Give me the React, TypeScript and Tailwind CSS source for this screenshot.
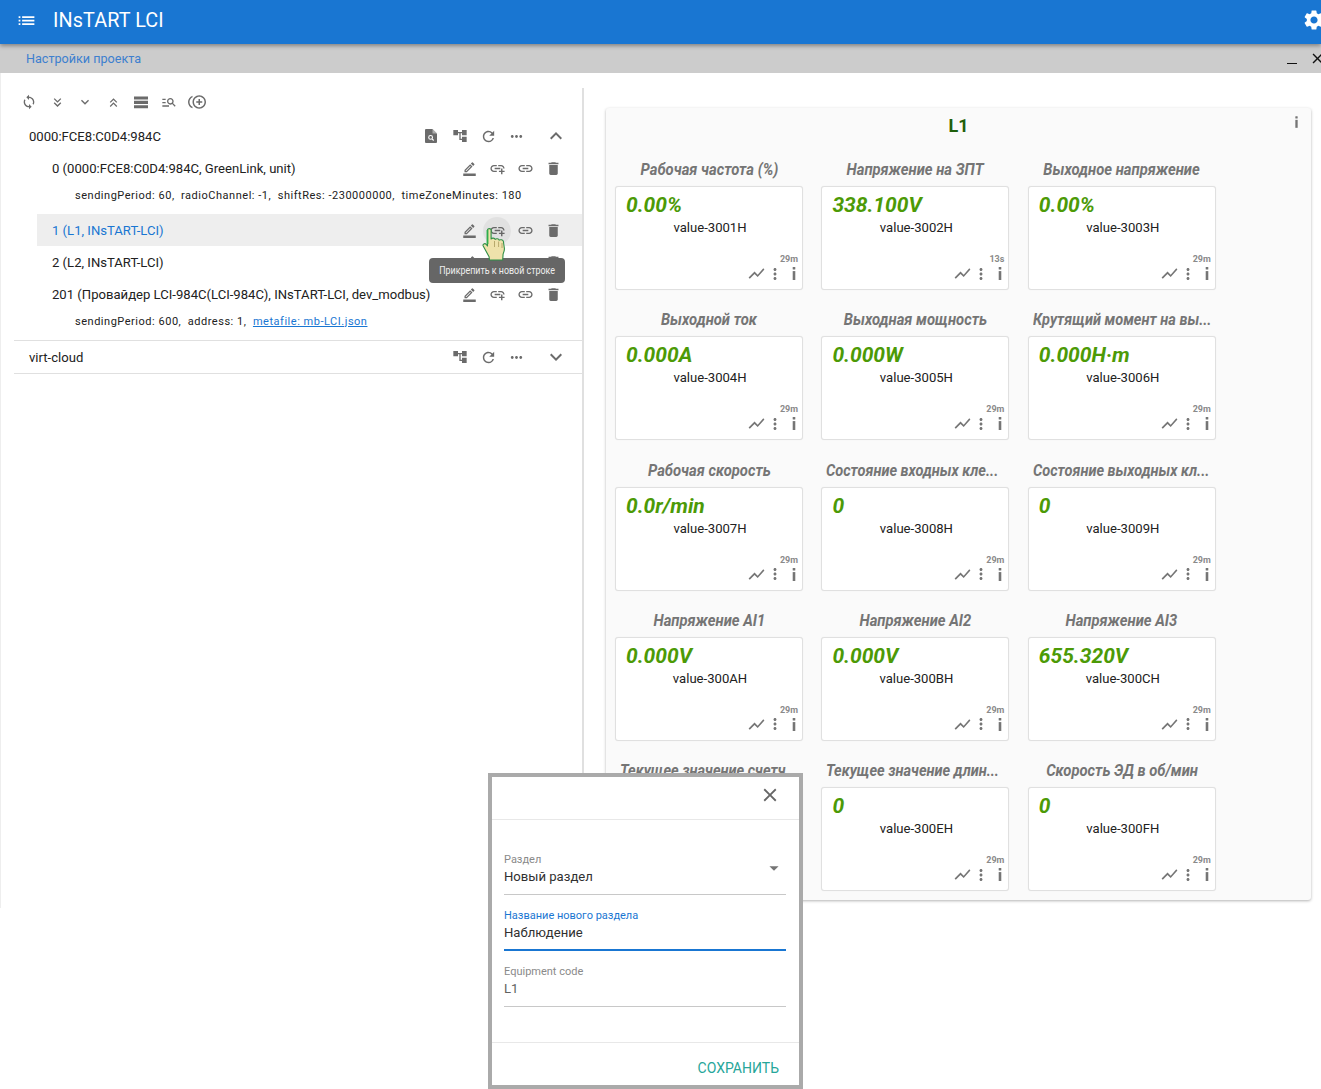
import { ReactNode } from "react";
import {
  MdAccountTree,
  MdAddLink,
  MdArrowDropDown,
  MdClose,
  MdControlPointDuplicate,
  MdDelete,
  MdExpandLess,
  MdExpandMore,
  MdKeyboardDoubleArrowDown,
  MdKeyboardDoubleArrowUp,
  MdLink,
  MdList,
  MdManageSearch,
  MdMoreHoriz,
  MdMoreVert,
  MdOutlineBorderColor,
  MdRefresh,
  MdSettings,
  MdShowChart,
  MdSync,
} from "react-icons/md";

const FONT = "font-['Roboto','Liberation_Sans',sans-serif]";

const cards = [
  { title: "Рабочая частота (%)", value: "0.00%", name: "value-3001H", age: "29m" },
  { title: "Напряжение на ЗПТ", value: "338.100V", name: "value-3002H", age: "13s" },
  { title: "Выходное напряжение", value: "0.00%", name: "value-3003H", age: "29m" },
  { title: "Выходной ток", value: "0.000A", name: "value-3004H", age: "29m" },
  { title: "Выходная мощность", value: "0.000W", name: "value-3005H", age: "29m" },
  { title: "Крутящий момент на вы...", value: "0.000Н·m", name: "value-3006H", age: "29m" },
  { title: "Рабочая скорость", value: "0.0r/min", name: "value-3007H", age: "29m" },
  { title: "Состояние входных кле...", value: "0", name: "value-3008H", age: "29m" },
  { title: "Состояние выходных кл...", value: "0", name: "value-3009H", age: "29m" },
  { title: "Напряжение AI1", value: "0.000V", name: "value-300AH", age: "29m" },
  { title: "Напряжение AI2", value: "0.000V", name: "value-300BH", age: "29m" },
  { title: "Напряжение AI3", value: "655.320V", name: "value-300CH", age: "29m" },
  { title: "Текущее значение счетч...", value: "0", name: "value-300DH", age: "29m" },
  { title: "Текущее значение длин...", value: "0", name: "value-300EH", age: "29m" },
  { title: "Скорость ЭД в об/мин", value: "0", name: "value-300FH", age: "29m" },
];

const InfoVariant = ({ className }: { className?: string }) => (
  <svg viewBox="0 0 6 14" className={className} fill="currentColor">
    <rect x="1.6" y="0" width="2.8" height="2.8" rx="0.6" />
    <path d="M1.6 4.4h2.8V14H1.6z" />
  </svg>
);

const BarsIcon = ({ className }: { className?: string }) => (
  <svg viewBox="0 0 16 14" className={className} fill="currentColor">
    <path d="M0 0h16v3.6H0zM0 5h16v3.6H0zM0 10h16v3.6H0z" />
  </svg>
);

// Page with a small magnifier, react-icons' find-in-page has a much bigger lens
const DocSearch = ({ className }: { className?: string }) => (
  <svg viewBox="0 0 12 14" className={className}>
    <path d="M1 0h6.5L12 4.5V13a1 1 0 0 1-1 1H1a1 1 0 0 1-1-1V1a1 1 0 0 1 1-1z" fill="currentColor" />
    <path d="M7.5 0v4.5H12" fill="#ffffff" fillOpacity="0.45" />
    <circle cx="5.6" cy="8.4" r="1.9" fill="none" stroke="#ffffff" strokeWidth="1.1" />
    <path d="M7 9.8l1.7 1.7" stroke="#ffffff" strokeWidth="1.1" />
  </svg>
);

const HandCursor = () => (
  <svg viewBox="0 0 24 36" className="absolute top-[226px] left-[482px] h-[36px] w-[24px]">
    <path
      d="M5.5 4c0-1.8 3.6-1.8 3.6 0v9c.8-1.2 3.6-1.2 4 .4 1-1 3.6-.8 4 .7 1.2-.8 4-.4 4.3 1.4l1 7c.2 2-.7 4-1.3 5.5l-.4 6H7.5l-.4-3.2L1.2 20c-.8-1.8 1.6-3.2 3-1.6L5.5 20z"
      fill="#efe2ab"
      stroke="#2f8f46"
      strokeWidth="1.1"
      strokeLinejoin="round"
    />
    <path d="M5.5 4v14" stroke="#2fae4c" strokeWidth="1.8" fill="none" />
    <path d="M12.5 15v6M16.6 15.5V21M20 17v5" stroke="#a99a5c" strokeWidth="0.8" fill="none" />
  </svg>
);

const Btn = ({ children, className = "" }: { children: ReactNode; className?: string }) => (
  <span className={`flex w-[28px] items-center justify-center text-[#6b6b6b] ${className}`}>{children}</span>
);

const ItemActions = () => (
  <div className="flex items-center">
    <Btn><MdOutlineBorderColor className="h-[15px] w-[15px]" /></Btn>
    <Btn><MdAddLink className="h-[17px] w-[17px]" /></Btn>
    <Btn><MdLink className="h-[17px] w-[17px]" /></Btn>
    <Btn><MdDelete className="h-[17px] w-[17px]" /></Btn>
  </div>
);

const Props = ({ children }: { children: ReactNode }) => (
  <div className="flex h-[30px] items-center pb-[6px] pl-[61px] text-[11px] tracking-[0.52px] text-[#212121]">{children}</div>
);

const Group = ({ name, open, doc }: { name: string; open?: boolean; doc?: boolean }) => (
  <div className="flex h-[32px] items-center pr-[12px] pl-[15px] text-[13.1px] text-[#212121]">
    <span className="flex-1 pt-[2px]">{name}</span>
    {doc && <Btn className="-ml-[1px] mr-[1px]"><DocSearch className="h-[14px] w-[12px]" /></Btn>}
    <Btn><MdAccountTree className="h-[16px] w-[16px]" /></Btn>
    <Btn><MdRefresh className="h-[17px] w-[17px]" /></Btn>
    <Btn><MdMoreHoriz className="h-[17px] w-[17px]" /></Btn>
    <Btn className="ml-[12px]">
      {open ? <MdExpandLess className="h-[24px] w-[24px]" /> : <MdExpandMore className="h-[24px] w-[24px]" />}
    </Btn>
  </div>
);

const Item = ({ text, selected }: { text: string; selected?: boolean }) => (
  <div
    className={`ml-[23px] flex h-[32px] items-center justify-between px-[15px] text-[13.1px] ${
      selected ? "bg-[#eeeeee] text-[#1976d2]" : "text-[#212121]"
    }`}
  >
    <span className="pt-[2px]">{text}</span>
    <ItemActions />
  </div>
);

const ValueCard = ({ title, value, name, age }: (typeof cards)[number]) => (
  <div className="flex h-[150.25px] flex-col">
    <div
      className={`mt-[1px] mb-[2px] flex h-[28px] items-center text-[16px] font-bold whitespace-nowrap text-[#757575] italic ${
        title.endsWith("...") ? "justify-start pl-[5px]" : "justify-center"
      }`}
    >
      <span className={`inline-block ${title.endsWith("...") ? "origin-left scale-x-[0.91]" : "scale-x-[0.925]"}`}>{title}</span>
    </div>
    <div className="flex h-[104px] flex-col rounded-[3px] border border-[#e0e0e0] bg-white px-[10px] pt-[4px] shadow-[0_0_1px_rgba(0,0,0,0.1)]">
      <div className="h-[28px] text-[21px] leading-[28px] font-bold text-[#4c9a06] italic">{value}</div>
      <div className="mt-[1px] pl-[2px] text-center text-[13.1px] leading-[16px] text-[#212121]">{name}</div>
      <div className="mt-auto mb-[6px] -mr-[6px] flex flex-col items-end text-[#757575]">
        <span className="text-[9px] leading-[10px] font-bold text-[#8a8a8a]">{age}</span>
        <div className="flex items-center">
          <MdShowChart className="h-[19px] w-[19px]" />
          <MdMoreVert className="h-[18px] w-[18px]" />
          <InfoVariant className="mr-[1px] ml-[7px] h-[13px] w-[6px]" />
        </div>
      </div>
    </div>
  </div>
);

const Field = ({
  label,
  value,
  focused,
  select,
  muted,
}: {
  label: string;
  value: string;
  focused?: boolean;
  select?: boolean;
  muted?: boolean;
}) => (
  <div className={`relative h-[56px] border-b ${focused ? "border-b-2 border-[#1976d2]" : "border-[#c8c8c8]"}`}>
    <div className={`pt-[14px] text-[11px] leading-[13px] ${focused ? "text-[#1976d2]" : "text-[#8a8a8a]"}`}>{label}</div>
    <div className={`mt-[2px] text-[13.1px] leading-[18px] ${muted ? "text-[#616161]" : "text-[#303030]"}`}>{value}</div>
    {select && <MdArrowDropDown className="absolute top-[18px] right-[1px] h-[22px] w-[22px] text-[#757575]" />}
  </div>
);

export default function App() {
  return (
    <div className={`relative h-[1089px] w-[1321px] overflow-hidden bg-white ${FONT}`}>
      <header className="relative z-10 flex h-[44px] items-center justify-between bg-[#1976d2] pb-[4px] pl-[16px] text-white shadow-[0_2px_4px_rgba(0,0,0,0.35)]">
        <div className="flex items-center">
          <MdList className="h-[21px] w-[21px]" />
          <span className="ml-[16px] pt-[2px] text-[19.8px] font-normal tracking-[0.1px]">INsTART LCI</span>
        </div>
        <MdSettings className="mr-[-5px] h-[24px] w-[24px]" />
      </header>

      <div className="flex h-[29px] items-center justify-between bg-[#cccccc] pl-[26px]">
        <span className="pt-[2px] text-[12.6px] text-[#3d7fcf]">Настройки проекта</span>
        <div className="mr-[-5px] flex items-center gap-[12px] text-[#111]">
          <span className="mt-[10px] h-[1.5px] w-[10px] bg-[#111]" />
          <MdClose className="h-[17px] w-[17px]" />
        </div>
      </div>

      <div className="flex h-[835px] border-l border-[#eeeeee]">
        <aside className="mt-[15px] w-[583px] border-r-2 border-[#e0e0e0]">
          <div className="flex h-[28px] items-center pl-[14px] text-[#757575]">
            <Btn><MdSync className="h-[16px] w-[16px]" /></Btn>
            <Btn><MdKeyboardDoubleArrowDown className="h-[15px] w-[15px]" /></Btn>
            <Btn><MdExpandMore className="h-[16px] w-[16px]" /></Btn>
            <Btn><MdKeyboardDoubleArrowUp className="h-[15px] w-[15px]" /></Btn>
            <Btn><BarsIcon className="h-[13px] w-[14px]" /></Btn>
            <Btn><MdManageSearch className="h-[16px] w-[16px]" /></Btn>
            <Btn><MdControlPointDuplicate className="h-[18px] w-[18px]" /></Btn>
          </div>
          <div className="ml-[13px] pt-[4px]">
            <Group name="0000:FCE8:C0D4:984C" open doc />
            <Item text="0 (0000:FCE8:C0D4:984C, GreenLink, unit)" />
            <Props>
              sendingPeriod: 60,&nbsp;&nbsp;radioChannel: -1,&nbsp;&nbsp;shiftRes: -230000000,&nbsp;&nbsp;timeZoneMinutes: 180
            </Props>
            <Item text="1 (L1, INsTART-LCI)" selected />
            <Item text="2 (L2, INsTART-LCI)" />
            <Item text="201 (Провайдер LCI-984C(LCI-984C), INsTART-LCI, dev_modbus)" />
            <Props>
              sendingPeriod: 600,&nbsp;&nbsp;address: 1,&nbsp;&nbsp;
              <span className="text-[#1976d2] underline">metafile: mb-LCI.json</span>
            </Props>
            <div className="border-y border-[#e0e0e0]">
              <Group name="virt-cloud" />
            </div>
          </div>
        </aside>

        <main className="mt-[35px] ml-[22px] h-[792px] w-[705px] rounded-[3px] bg-[#fafafa] px-[9px] shadow-[0_1px_3px_rgba(0,0,0,0.3)]">
          <div className="relative flex h-[47px] justify-center pt-[4px] text-[18px] font-bold text-[#1f5f0a]">
            L1
            <InfoVariant className="absolute top-[8px] right-[3px] h-[12px] w-[5px] text-[#757575]" />
          </div>
          <div className="grid grid-cols-[188px_188px_188px] gap-x-[18.4px]">
            {cards.map((c) => (
              <ValueCard key={c.name} {...c} />
            ))}
          </div>
        </main>
      </div>

      {/* Highlight behind the hovered button */}
      <div className="absolute top-[217px] left-[483px] h-[28px] w-[28px] rounded-full bg-[#000]/5" />
      <div className="absolute top-[258px] left-[429px] flex h-[25px] w-[136px] items-center justify-center rounded-[4px] bg-[#666666] text-[10px] whitespace-nowrap text-[#eeeeee]">
        <span className="inline-block scale-x-[0.89]">Прикрепить к новой строке</span>
      </div>
      <HandCursor />

      {/* Dialog */}
      <div className="absolute top-[773px] left-[488px] flex h-[316px] w-[315px] flex-col border-4 border-[#aaaaaa] bg-white">
        <div className="flex h-[43px] items-center justify-end border-b border-[#e8e8e8] pr-[18px] pb-[6px]">
          <MdClose className="h-[22px] w-[22px] text-[#666666]" />
        </div>
        <div className="h-[222px] pt-[19px] pr-[13px] pl-[12px]">
          <Field label="Раздел" value="Новый раздел" select />
          <Field label="Название нового раздела" value="Наблюдение" focused />
          <Field label="Equipment code" value="L1" muted />
        </div>
        <div className="flex h-[43px] items-center justify-end border-t border-[#e8e8e8] pt-[8px] pr-[20px] text-[14px] text-[#26a69a]">
          СОХРАНИТЬ
        </div>
      </div>
    </div>
  );
}
